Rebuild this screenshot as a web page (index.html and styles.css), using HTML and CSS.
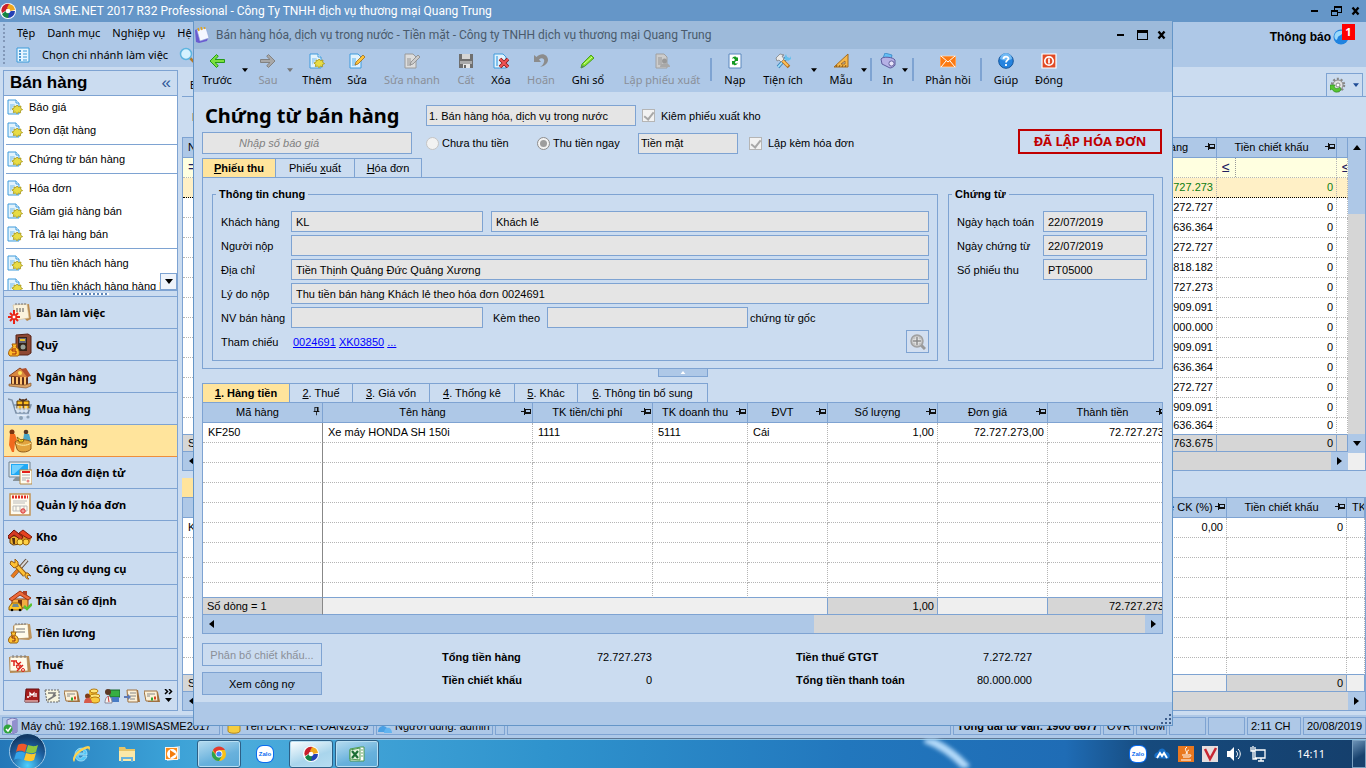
FILE: index.html
```html
<!DOCTYPE html>
<html lang="vi">
<head>
<meta charset="utf-8">
<title>MISA SME.NET 2017 R32 Professional</title>
<link rel="stylesheet" href="styles.css">
</head>
<body>
<svg class="defs" aria-hidden="true">
  <symbol id="misa" viewBox="0 0 16 16"><circle cx="8" cy="8" r="8" fill="#fff"/><path d="M3 3A7 7 0 0 1 10 1L8 6 5.500 8 2 10A7 7 0 0 1 3 3" fill="#c8202c"/><path d="M9 1a7 7 0 0 1 6 6l-5 1L7 5Z" fill="#f0a91c"/><path d="M15 8a7 7 0 0 1-7 7l0-5 3-2Z" fill="#2441b5"/><path d="M8 15a7 7 0 0 1-6-4l4-3 3 3Z" fill="#158543"/><circle cx="8" cy="8" r="2.300" fill="#fff"/></symbol>
  <symbol id="doc" viewBox="0 0 16 16"><path d="M1 1h8l3 3v11H1Z" fill="#e2f3fd" stroke="#3f9bdc"/><path d="M9 1v3h3" fill="#fff" stroke="#3f9bdc"/><path d="M3 5v7l5-7Z" fill="#a8d6f4"/><path d="m10 6 1.500 1.600 2.500-.6-.4 2.200 2 1.400-2.200 1 .2 2.200-2.200-.8-1.400 1.800-1.400-1.800-2.300.6.500-2.100L4.900 10l2.200-.9L7 7l2 .5Z" fill="#e8dc45" stroke="#a59415" stroke-width=".8"/></symbol>
  <symbol id="list" viewBox="0 0 16 16"><path d="M2 1h12v14H2Z" fill="#e6f5ff" stroke="#3a9ad9"/><path d="M4 4h2M4 7h2M4 10h2M4 13h2" stroke="#1b7cc4" stroke-width="1.500"/><path d="M8 4h4M8 7h4M8 10h4M8 13h4" stroke="#3a9ad9"/></symbol>
  <symbol id="pin" viewBox="0 0 11 9"><path d="M0 4h3v1H0ZM3 1h1v7H3ZM4 2h6v5H4Zm1 1v2h4V3Z" fill="#111" fill-rule="evenodd"/></symbol>
  <symbol id="pinv" viewBox="0 0 9 11"><path d="M2 0h5v5h1v1H5v4H4V6H1V5h1Zm1 1v4h2V1Z" fill="#111" fill-rule="evenodd"/></symbol>
  <symbol id="left" viewBox="0 0 5 8"><path d="M5 0v8L0 4Z"/></symbol>
  <symbol id="right" viewBox="0 0 5 8"><path d="M0 0v8l5-4Z"/></symbol>
  <symbol id="up" viewBox="0 0 8 5"><path d="M0 5h8L4 0Z"/></symbol>
  <symbol id="down" viewBox="0 0 8 5"><path d="M0 0h8L4 5Z"/></symbol>
  <symbol id="min" viewBox="0 0 10 12"><path d="M1 5h7v2H1Z"/></symbol>
  <symbol id="max" viewBox="0 0 12 12"><path d="M1 1h11v10H1Zm1 3v6h9V4Z" fill-rule="evenodd"/></symbol>
  <symbol id="restore" viewBox="0 0 12 12"><path d="M4 1h8v7H8v3H1V5h3Zm1 2v2h3v2h3V3ZM2 7v3h5V7Z" fill-rule="evenodd"/></symbol>
  <symbol id="close" viewBox="0 0 10 10"><path d="m1.500 1.500 6 7m0-7-6 7" stroke="#000" stroke-width="2.300"/></symbol>
  <symbol id="book" viewBox="0 0 16 16"><path d="m1 3 3-1 3 10 7-1-1 3-8 2-3-1Z" fill="#6a5bd0"/><path d="m3 3 9-2 3 10-9 3Z" fill="#f4f7ff" stroke="#8fa3d8" stroke-width=".6"/><path d="m4 1 1 3m2-4 1 3m2-4 1 3" stroke="#e2a51b" stroke-width="1.500"/></symbol>
  <symbol id="back" viewBox="0 0 16 16"><path d="m7.500 1.500 1.800 1.800L6 6.500h9.500v3H6l3.300 3.200-1.800 1.800L1 8Z" fill="#7be03e" stroke="#249a18"/></symbol>
  <symbol id="next" viewBox="0 0 16 16"><path d="M8.500 1.500 6.700 3.300 10 6.500H.5v3H10l-3.300 3.200 1.800 1.800L15 8Z" fill="#a8a8a8" stroke="#828282"/></symbol>
  <symbol id="edit" viewBox="0 0 16 16"><path d="M1 1h8l3 3v11H1Z" fill="#e0f2fd" stroke="#3f9bdc"/><path d="M3 5h4v8H3Z" fill="#9bd1f3"/><path d="m7 9 7-7 2 2-7 7-3 1Z" fill="#ffc53c" stroke="#a06c18" stroke-width=".8"/></symbol>
  <symbol id="editgray" viewBox="0 0 16 16"><path d="M1 1h8l3 3v11H1Z" fill="#ddd" stroke="#9a9a9a"/><path d="M3 5h4v8H3Z" fill="#b9b9b9"/><path d="m7 9 7-7 2 2-7 7-3 1Z" fill="#ccc" stroke="#888" stroke-width=".8"/></symbol>
  <symbol id="save" viewBox="0 0 16 16"><path d="M1 1h14v14H1Z" fill="#6f6f6f"/><path d="M4 1h8v5H4Z" fill="#d5d5d5"/><path d="M2 8h12v3H2Z" fill="#aaa"/><path d="M5 11h7v4H5Z" fill="#e6e6e6"/><path d="M6 12h2v3H6Z" fill="#666"/></symbol>
  <symbol id="del" viewBox="0 0 16 16"><path d="M1 1h9l3 3v11H1Z" fill="#e0f2fd" stroke="#3f9bdc"/><path d="M3 3h2v10H3Z" fill="#7fc1ee"/><path d="m7 6 8 8m0-8-8 8" stroke="#7d1414" stroke-width="3.600"/><path d="m7 6 8 8m0-8-8 8" stroke="#f05353" stroke-width="2.200"/></symbol>
  <symbol id="undo" viewBox="0 0 16 16"><path d="M1 2v7h7L6 6.500C9 4 12 6 11 9c-.5 2-2 4-4 5 5-1 8-4 8-7C15 1 8-1 3.500 4Z" fill="#8c8c8c"/></symbol>
  <symbol id="pencil" viewBox="0 0 16 16"><path d="m2 11 9-9 3 3-9 8-4 2Z" fill="#85e32c" stroke="#4a9f20"/><path d="m4 11 8-7" stroke="#d4ff9c"/><path d="m1 15 2-3 1 2Z" fill="#577"/></symbol>
  <symbol id="docgray" viewBox="0 0 16 16"><path d="M2 1h8l3 3v11H2Z" fill="#ccc" stroke="#a0a0a0"/><path d="M4 4h4v8H4Z" fill="#b0b0b0"/><circle cx="10.500" cy="8" r="2.500" fill="#999"/><path d="M6 14c0-5 10-5 10 0Z" fill="#a8a8a8"/></symbol>
  <symbol id="reload" viewBox="0 0 16 16"><path d="M2 1h12v14H2Z" fill="#fff" stroke="#5b87bd"/><path d="M5 6c1-3 4-3 5-1l1-1v4H7l1-1c-1-2-2-2-3-1ZM11 9c-1 4-4 4-5 2l-1 1V8h4L8 9c0 2 2 2 3 0Z" fill="#149a21"/></symbol>
  <symbol id="tools" viewBox="0 0 16 16"><path d="m3 14 9-10" stroke="#3c84bb" stroke-width="3.400"/><path d="m3 14 9-10" stroke="#9fe0fb" stroke-width="1.800"/><path d="m11 1 1 3 3 1 1-2v3l-3 2-3-2V3Z" fill="#65c0ed"/><path d="m6 6 8 8" stroke="#b06e20" stroke-width="3.600"/><path d="m7 7 6 6" stroke="#ffc058" stroke-width="2"/><path d="m1 5 4-4 4 1-2 1 2 3-3 3-2-2-2 1Z" fill="#eaeaea" stroke="#777" stroke-width=".7"/></symbol>
  <symbol id="ruler" viewBox="0 0 16 16"><path d="M15 1v13H1Zm-3 7-4 3h4Z" fill="#f6b84b" stroke="#a46b1f" fill-rule="evenodd"/><path d="m3 14 1-2m2 2 1-2m2 2 1-2m2 2 1-2" stroke="#704306" stroke-width=".8"/></symbol>
  <symbol id="print" viewBox="0 0 16 16"><path d="m3 5 2-5 7 2-1 5Z" fill="#65bff5" stroke="#2e7fc0" stroke-width=".7"/><path d="M1 6c2-3 12-2 14 1v5c-1 2-4 3-5 3L2 11Z" fill="#b6b1e5" stroke="#5f5c9e"/><circle cx="11.500" cy="10.500" r="2.600" fill="#e7e4fa" stroke="#65639f"/></symbol>
  <symbol id="mail" viewBox="0 0 16 16"><path d="M0 3h16v11H0Z" fill="#fc7a13" stroke="#ffdfc0" stroke-width=".7"/><path d="m1 3 7 6 7-6M1 14l5-6m9 6-5-6" fill="none" stroke="#fff"/></symbol>
  <symbol id="help" viewBox="0 0 16 16"><circle cx="8" cy="8" r="7.300" fill="#2583df" stroke="#14559a"/><path d="M2 6a6 6 0 0 1 12 0c-4 2-8 2-12 0" fill="#70b9f5"/><path d="M5.500 6c0-3 5-3 5-.4C10.500 7 8 7.500 8 9.500M8 11v2" fill="none" stroke="#fff" stroke-width="1.800"/></symbol>
  <symbol id="power" viewBox="0 0 16 16"><path d="M1 1h14v14H1Z" fill="#e14a25" stroke="#fff" stroke-width="1.200"/><circle cx="8" cy="8" r="4.200" fill="none" stroke="#fff" stroke-width="1.700"/><path d="M8 5.500v5" stroke="#fff" stroke-width="1.700"/></symbol>
  <symbol id="gear" viewBox="0 0 16 16"><circle cx="8" cy="8" r="6" fill="none" stroke="#888" stroke-width="2.500" stroke-dasharray="2 1.770"/><circle cx="8" cy="8" r="5" fill="#e2e2e2" stroke="#8a8a8a"/><circle cx="8" cy="8" r="2" fill="#fff" stroke="#888"/><path d="M0 8h5L4 10c2 2 4 2 6 0l1 3c-3 3-7 3-9-1L0 13Z" fill="#57c531" stroke="#278819" stroke-width=".6"/></symbol>
  <symbol id="globe" viewBox="0 0 16 16"><circle cx="8" cy="8" r="7.500" fill="#1f83e0"/><path d="M2 5c2-4 8-4 10-2-3 1-3 3-6 4-2 1-1 4-3 4-2-2-2-4-1-6" fill="#9ad9fb"/></symbol>
  <symbol id="search" viewBox="0 0 16 16"><path d="m10 10 5 5" stroke="#b27a2c" stroke-width="2.500"/><circle cx="7" cy="7" r="5.500" fill="#d4f2ff" stroke="#5eb4df" stroke-width="1.500"/></symbol>
  <symbol id="zoomadd" viewBox="0 0 16 16"><path d="m10 10 5 5" stroke="#999" stroke-width="3"/><circle cx="7" cy="7" r="6" fill="#c4c4c4" stroke="#a0a0a0" stroke-width="1.500"/><path d="M7 3v8M3 7h8" stroke="#f0f0f0" stroke-width="3"/><path d="M7 3v8M3 7h8" stroke="#888" stroke-width="1.500"/></symbol>

  <symbol id="n-desk" viewBox="0 0 24 24"><path d="m5 5 16-2 2 15-4 2Z" fill="#b98a50"/><path d="M5 4 19 3l2 14-13 2Z" fill="#fbf3dd" stroke="#d5bb8b" stroke-width=".6"/><path d="M8 4V2m3 2V2m3 2V2m3 2V2" stroke="#777"/><path d="M8 8h9M8 10h9" stroke="#555" stroke-dasharray="2 1"/><path d="M6 9v14M0 16h12M2 12l8 8m0-8-8 8" stroke="#e92316" stroke-width="2"/><circle cx="6" cy="16" r="2" fill="#fff" stroke="#e92316"/></symbol>
  <symbol id="n-fund" viewBox="0 0 24 24"><path d="m8 2 12-1 3 2v17l-3 2H8Z" fill="#8e4833" stroke="#572216"/><path d="M10 4h9v14h-9Z" fill="#352418"/><path d="M11 5h7v5h-7Z" fill="#667"/><path d="M12 7h5" stroke="#e9c32a" stroke-width="2"/><circle cx="15" cy="14" r="2.500" fill="#99a29a"/><path d="m4 11 5 0-1 3c4 2 4 8 2 9H2c-3-2-1-7 3-9Z" fill="#ffba28" stroke="#a15b09"/><path d="M8 16H4v2h4v3H4" fill="none" stroke="#9b2609"/></symbol>
  <symbol id="n-bank" viewBox="0 0 24 24"><path d="M3 11h17v9H3Z" fill="#5c2e1c"/><path d="M1 11 12 3l9 7-2 3Z" fill="#d9873f" stroke="#87401d"/><path d="m13 4 5-1 5 8-4 1Z" fill="#b24f2c"/><path d="M5 12v7m4-7v7m4-7v8m4-8v8" stroke="#ffc572" stroke-width="2"/><path d="m1 19 16 1 6-2v3l-5 2-17-2Z" fill="#dca465" stroke="#7a4924" stroke-width=".6"/><circle cx="12" cy="8" r="2" fill="#ffe65c"/></symbol>
  <symbol id="n-buy" viewBox="0 0 24 24"><path d="m0 2 4 1 4 13h13M6 8h17l-3 8" fill="none" stroke="#7d91a8" stroke-width="1.500"/><path d="M9 4h12v8H9Z" fill="#ffbf1d" stroke="#593907"/><path d="M15 2v10M9 8h12M11 2l4 2 4-2" stroke="#573319" stroke-width="1.500" fill="none"/><path d="M7 12h15M10 9v7m4-7v7m4-7v7M9 18l11 1" stroke="#e8f0f8"/><circle cx="13" cy="21" r="2" fill="#8ca2b7"/><circle cx="20" cy="20" r="1.600" fill="#8ca2b7"/></symbol>
  <symbol id="n-sell" viewBox="0 0 24 24"><circle cx="4" cy="3" r="2.500" fill="#7a3511"/><path d="m2 5 5 0 2 6-2 3-1 9H4L1 16Z" fill="#f26a1e"/><circle cx="18" cy="3" r="2.300" fill="#573825"/><path d="m16 5 5 0 2 7h-8Z" fill="#4aa7c9"/><path d="M7 13c3-3 13-3 16 0v7c-3 4-13 4-14 0Z" fill="#e2a33d" stroke="#925a17"/><path d="M8 14c4 3 11 3 15 0" stroke="#fff0a6" fill="none"/><path d="m9 8 4 3 3-1-1 3-4 0Z" fill="#ffdb22" stroke="#684506" stroke-width=".7"/></symbol>
  <symbol id="n-einv" viewBox="0 0 24 24"><path d="M1 1h21v15H1Z" fill="#e1e8ec" stroke="#738390"/><path d="M3 3h17v11H3Z" fill="#20a9f5"/><path d="m4 4 12 0-10 9H4Z" fill="#72d1ff"/><path d="M8 16h4v4H5v-1Z" fill="#879299"/><path d="M12 9h12v14H12Z" fill="#fffef1" stroke="#b58b46"/><path d="M14 11h8" stroke="#e52119" stroke-width="2"/><path d="M14 14h8m-8 3h8m-8 2h4" stroke="#aaa"/><circle cx="20" cy="20" r="1.500" fill="#e58582"/></symbol>
  <symbol id="n-inv" viewBox="0 0 24 24"><path d="M2 1h20v21H2Z" fill="#fffbef" stroke="#c39455" stroke-width="1.500"/><path d="M4 4h16" stroke="#e12b21" stroke-width="3" stroke-dasharray="2 1"/><path d="M5 8h14M5 10h12M5 13h14v5H5Zm3 0v5m4-5v5m4-5v5" fill="none" stroke="#bbb"/><circle cx="15" cy="18" r="2.200" fill="#ef9a94" stroke="#d33"/></symbol>
  <symbol id="n-store" viewBox="0 0 24 24"><path d="m10 10 6-4 8 6-3 7H10Z" fill="#d98924"/><path d="m11 8 4-3 9 7-3 2-7-4Z" fill="#e64220" stroke="#7e1b0e"/><path d="M2 11h11v8l-8 1-3-2Z" fill="#efb32d" stroke="#6c410d"/><path d="m0 11 6-6 9 7-2 3-7-5-5 4Z" fill="#d53a22" stroke="#6f1308"/><path d="M4 13h3v6H5Z" fill="#563010"/><circle cx="12" cy="17" r="3" fill="#ffe25c" stroke="#9e6a0c"/><circle cx="18" cy="17" r="3" fill="#ffcf42" stroke="#9e6a0c"/></symbol>
  <symbol id="n-tools" viewBox="0 0 24 24"><path d="m4 20 15-17" stroke="#5e4632" stroke-width="4"/><path d="m4 20 15-17" stroke="#d9d9d9" stroke-width="2"/><path d="m4 20 6-7" stroke="#e7791d" stroke-width="3"/><path d="m7 7 10 11" stroke="#985d14" stroke-width="5"/><path d="m7 7 10 11" stroke="#ffc132" stroke-width="3"/><path d="m3 4 4 2 0-4 3 3 0 4-4 2-4-4Zm17 12 3 3-3-1-1 2 2 2c-4 0-5-4-3-6Z" fill="#ffc132" stroke="#985d14"/></symbol>
  <symbol id="n-asset" viewBox="0 0 24 24"><path d="M4 10h16v9H4Z" fill="#f3ad42" stroke="#8f3b13"/><path d="m1 10 11-8 11 7-3 2-8-5-8 6Z" fill="#ee6a3b" stroke="#9f3512"/><path d="M15 2h4v5l-4-2Z" fill="#ad3f28"/><path d="M10 11h4v8h-4Z" fill="#713312"/><path d="m1 18 3-4h7l3 4v3H1Z" fill="#ffc625" stroke="#97630a"/><path d="m5 15 5 0 1 3H4Z" fill="#6f8b92"/><circle cx="4" cy="21" r="1.300"/><circle cx="12" cy="21" r="1.300"/><path d="m16 17 3 3 5-5" fill="none" stroke="#59c230" stroke-width="2.500"/></symbol>
  <symbol id="n-pay" viewBox="0 0 24 24"><path d="m5 5 17-2 2 14-3 2-16-1Z" fill="#be945b"/><path d="m6 4 14-1 1 14-15 1Z" fill="#fffbea" stroke="#ad8753" stroke-width=".7"/><path d="M8 4V2m3 2V2m3 2V2m3 2V2M8 8h9m-9 3h9" stroke="#777"/><path d="m3 11 5 0-1 3c4 2 4 7 2 8H2c-3-2-1-6 2-8Z" fill="#ffc230" stroke="#98600d"/><path d="M7 15H4v2h3v3H4" fill="none" stroke="#872b0e"/></symbol>
  <symbol id="n-tax" viewBox="0 0 24 24"><path d="m1 4 20-1 2 16-21 1Z" fill="#b98d55"/><path d="M2 4h17l1 14H2Z" fill="#fffbea" stroke="#ad8753" stroke-width=".7"/><path d="M5 5V2m4 3V2m4 3V2m4 3V2" stroke="#777"/><path d="M3 8h6M6 8v5M8 13l5-4M8 9l5 4M9 18l6-6" stroke="#dd241b" stroke-width="1.500"/><circle cx="10" cy="14" r="1.500" fill="none" stroke="#dd241b"/><circle cx="15" cy="17" r="1.500" fill="none" stroke="#dd241b"/></symbol>
  <symbol id="t-book" viewBox="0 0 16 16"><path d="M2 1h13v13H1Z" fill="#a71d1d" stroke="#641010"/><path d="M1 13h13" stroke="#fff"/><path d="M3 9h2m1 0V5l2 2 2-2v4m2-4v4" stroke="#fff" stroke-width="1.300" fill="none"/></symbol>
  <symbol id="t-check" viewBox="0 0 16 16"><path d="M1 2h14v12H3Z" fill="#f7f5df" stroke="#666" stroke-dasharray="2 1"/><path d="m4 5 7 0-2 3m-5 4 8-5" stroke="#777" fill="none" stroke-width="1.500"/></symbol>
  <symbol id="t-cal" viewBox="0 0 16 16"><path d="M1 4h13l2 10H4Z" fill="#a06f3b"/><path d="M0 3h13l1 10H2Z" fill="#fbf0d8" stroke="#9e7342"/><path d="M3 6h8M3 8h3" stroke="#888"/><path d="M7 11h2" stroke="#3a3" stroke-width="3"/><path d="M10 10h2" stroke="#d42" stroke-width="3"/></symbol>
  <symbol id="t-con" viewBox="0 0 16 16"><path d="M3 2h11l2 12H5Z" fill="#a06f3b"/><path d="M3 2h10l1 12H4Z" fill="#fbf0d8" stroke="#9e7342"/><path d="M6 5h6M6 8h6M6 11h5" stroke="#888"/><path d="M0 8h4V6l3 3-3 3v-2H0Z" fill="#5d79b5"/></symbol>
  <symbol id="t-coins" viewBox="0 0 16 16"><path d="M5 2h8v13H5Z" fill="#f4bd29"/><ellipse cx="10" cy="3" rx="4" ry="2" fill="#ffe678" stroke="#b67b10"/><ellipse cx="11" cy="8" rx="5" ry="2" fill="#ffe678" stroke="#b67b10"/><ellipse cx="11" cy="12" rx="5" ry="3" fill="#f8cb3e" stroke="#b67b10"/><circle cx="3.500" cy="8" r="2.500" fill="#7e3d18"/><path d="M0 15c0-7 8-7 8 0Z" fill="#d65a4a"/></symbol>
  <symbol id="t-person" viewBox="0 0 16 16"><path d="M5 2h11v7H6Z" fill="#37af42" stroke="#17652b"/><path d="M7 9h8v5H8Z" fill="#487cc5"/><circle cx="4" cy="4" r="3" fill="#5b3825"/><path d="M1 15c0-9 7-9 7 0Z" fill="#f6f3ef" stroke="#889"/><path d="m4 8 1 6" stroke="#c33"/></symbol>
</svg>

<div class="desktop">
<div class="app">
  <header class="apptitle"><svg class="i16"><use href="#misa"/></svg><h1>MISA SME.NET 2017 R32 Professional - Công Ty TNHH dịch vụ thương mại Quang Trung</h1>
    <div class="winbtns"><button aria-label="Thu nhỏ"><svg class="i12"><use href="#min"/></svg></button><button aria-label="Khôi phục"><svg class="i12"><use href="#restore"/></svg></button><button aria-label="Đóng"><svg class="i10"><use href="#close"/></svg></button></div>
  </header>
  <div class="menus">
    <div>
      <nav class="menu"><i class="grip"></i><button>Tệp</button><button>Danh mục</button><button>Nghiệp vụ</button><button>Hệ thống</button></nav>
      <div class="menu second"><i class="grip"></i><button><svg class="i16"><use href="#list"/></svg>Chọn chi nhánh làm việc</button><button aria-label="Tìm"><svg class="i16"><use href="#search"/></svg></button></div>
    </div>
    <button class="notice">Thông báo<svg class="i16"><use href="#globe"/></svg><span class="badge">1</span></button>
  </div>
  <div class="work">
    <aside class="side">
      <div class="sidehead"><h2>Bán hàng</h2><button aria-label="Thu gọn">«</button></div>
      <div class="tasks">
        <a href="#a"><svg class="i16"><use href="#doc"/></svg>Báo giá</a>
        <a href="#a"><svg class="i16"><use href="#doc"/></svg>Đơn đặt hàng</a><hr>
        <a href="#a"><svg class="i16"><use href="#doc"/></svg>Chứng từ bán hàng</a><hr>
        <a href="#a"><svg class="i16"><use href="#doc"/></svg>Hóa đơn</a>
        <a href="#a"><svg class="i16"><use href="#doc"/></svg>Giảm giá hàng bán</a>
        <a href="#a"><svg class="i16"><use href="#doc"/></svg>Trả lại hàng bán</a><hr>
        <a href="#a"><svg class="i16"><use href="#doc"/></svg>Thu tiền khách hàng</a>
        <a href="#a"><svg class="i16"><use href="#doc"/></svg>Thu tiền khách hàng hàng loạt</a>
        <button class="more" aria-label="Cuộn xuống"><svg class="arr"><use href="#down"/></svg></button>
      </div>
      <div class="handle"><i></i></div>
      <nav class="mods">
        <button><svg><use href="#n-desk"/></svg>Bàn làm việc</button>
        <button><svg><use href="#n-fund"/></svg>Quỹ</button>
        <button><svg><use href="#n-bank"/></svg>Ngân hàng</button>
        <button><svg><use href="#n-buy"/></svg>Mua hàng</button>
        <button class="on"><svg><use href="#n-sell"/></svg>Bán hàng</button>
        <button><svg><use href="#n-einv"/></svg>Hóa đơn điện tử</button>
        <button><svg><use href="#n-inv"/></svg>Quản lý hóa đơn</button>
        <button><svg><use href="#n-store"/></svg>Kho</button>
        <button><svg><use href="#n-tools"/></svg>Công cụ dụng cụ</button>
        <button><svg><use href="#n-asset"/></svg>Tài sản cố định</button>
        <button><svg><use href="#n-pay"/></svg>Tiền lương</button>
        <button><svg><use href="#n-tax"/></svg>Thuế</button>
      </nav>
      <div class="quick">
        <button aria-label="Sổ"><svg class="i16"><use href="#t-book"/></svg></button>
        <button aria-label="Kiểm tra"><svg class="i16"><use href="#t-check"/></svg></button>
        <button aria-label="Lịch"><svg class="i16"><use href="#t-cal"/></svg></button>
        <button aria-label="Giá thành"><svg class="i16"><use href="#t-coins"/></svg></button>
        <button aria-label="Đối tượng"><svg class="i16"><use href="#t-person"/></svg></button>
        <button aria-label="Hợp đồng"><svg class="i16"><use href="#t-con"/></svg></button>
        <button aria-label="Báo cáo"><svg class="i16"><use href="#t-cal"/></svg></button>
        <button aria-label="Thêm"><svg class="chev" viewBox="0 0 9 14"><path d="m1 0 2.500 2.500L1 5m4-5 2.500 2.500L5 5" fill="none" stroke="#000" stroke-width="1.500"/><path d="M1 9h7l-3.500 4Z"/></svg></button>
      </div>
    </aside>
    <main class="content">
      <div class="contentbar"><span>Bán hàng</span><button class="gearbtn" aria-label="Tùy chọn"><svg class="i16"><use href="#gear"/></svg><svg class="arr s"><use href="#down"/></svg></button></div>
      <div class="period">Kỳ</div>
      <div class="back b1">
        <div class="backcol">
          <table class="grid">
            <colgroup><col class="w120"><col><col class="w120"><col class="w120"><col class="w11"></colgroup>
            <thead><tr><th class="l">Ngày</th><th></th><th><div>Tổng tiền hàng<svg><use href="#pin"/></svg></div></th><th><div>Tiền chiết khấu<svg><use href="#pin"/></svg></div></th><th></th></tr></thead>
            <tbody>
            <tr class="filter"><td><b>=</b></td><td></td><td></td><td><b class="op">≤</b></td><td><b>≤</b></td></tr>
            <tr class="sel"><td></td><td></td><td>72.727.273</td><td>0</td><td></td></tr>
            <tr><td><td><td>37.272.727<td>0<td></tr>
            <tr><td><td><td>38.636.364<td>0<td></tr>
            <tr><td><td><td>37.272.727<td>0<td></tr>
            <tr><td><td><td>31.818.182<td>0<td></tr>
            <tr><td><td><td>72.727.273<td>0<td></tr>
            <tr><td><td><td>40.909.091<td>0<td></tr>
            <tr><td><td><td>40.000.000<td>0<td></tr>
            <tr><td><td><td>40.909.091<td>0<td></tr>
            <tr><td><td><td>38.636.364<td>0<td></tr>
            <tr><td><td><td>37.272.727<td>0<td></tr>
            <tr><td><td><td>40.909.091<td>0<td></tr>
            <tr class="tight"><td><td><td>38.636.364<td>0<td></tr>
            </tbody>
            <tfoot><tr><td class="l">Số dòng</td><td></td><td>9.763.675</td><td>0</td><td></td></tr></tfoot>
          </table>
          <div class="hs"><button aria-label="Trái"><svg class="arh"><use href="#left"/></svg></button><i class="thumb"></i><i class="rest"></i><button aria-label="Phải"><svg class="arh"><use href="#right"/></svg></button></div>
        </div>
        <div class="vs"><button aria-label="Lên"><svg class="arr"><use href="#up"/></svg></button><i class="vthumb"></i><i class="rest"></i><button aria-label="Xuống"><svg class="arr"><use href="#down"/></svg></button><i class="corner"></i></div>
      </div>
      <div class="backtab"><button>● Hàng tiền</button></div>
      <div class="back b2">
        <div class="backcol">
          <table class="grid">
            <colgroup><col class="w120"><col><col class="w80"><col class="w120"><col class="w18"></colgroup>
            <thead><tr><th></th><th></th><th><div>Tỷ lệ CK (%)<svg><use href="#pin"/></svg></div></th><th><div>Tiền chiết khấu<svg><use href="#pin"/></svg></div></th><th class="l">TK</th></tr></thead>
            <tbody>
            <tr><td class="l">KF250</td><td></td><td>0,00</td><td>0</td><td></td></tr>
            <tr><td><td><td><td><td></tr><tr><td><td><td><td><td></tr><tr><td><td><td><td><td></tr><tr><td><td><td><td><td></tr><tr><td><td><td><td><td></tr><tr><td><td><td><td><td></tr>
            <tr class="tight"><td><td><td><td><td></tr>
            </tbody>
            <tfoot><tr><td class="l">Số dòng</td><td></td><td class="lt"></td><td>0</td><td class="lt"></td></tr></tfoot>
          </table>
          <div class="hs"><button aria-label="Trái"><svg class="arh"><use href="#left"/></svg></button><i class="thumb"></i><i class="rest"></i><button aria-label="Phải"><svg class="arh"><use href="#right"/></svg></button></div>
        </div>
      </div>
    </main>
  </div>
  <footer class="status">
    <span class="s1"><svg class="i16" viewBox="0 0 16 16"><path d="m4 2 5-2 5 1v13l-5 2-5-3Z" fill="#d4d2f1" stroke="#7676b3"/><path d="m9 3 5-2v13l-5 2Z" fill="#9290ce"/><circle cx="5" cy="11" r="4.500" fill="#2fa53b"/><path d="m3 11 2 2 3-4" fill="none" stroke="#fff" stroke-width="1.500"/></svg>Máy chủ: 192.168.1.19\MISASME2017</span>
    <span class="s2"><svg class="i16" viewBox="0 0 16 16"><path d="M2 4v9c0 3 12 3 12 0V4Z" fill="#f5cd3f" stroke="#b18620"/><ellipse cx="8" cy="4" rx="6" ry="2.500" fill="#fff09a" stroke="#b18620"/></svg>Tên DLKT: KETOAN2019</span>
    <span class="s3"><svg class="i16" viewBox="0 0 16 16"><circle cx="6" cy="5" r="3" fill="#7cc4f4"/><path d="M1 14c0-8 10-8 10 0Z" fill="#4aa0e4"/><circle cx="11" cy="6" r="3" fill="#a6dafa"/><path d="M7 15c0-7 8-7 8 0Z" fill="#62b4f0"/></svg>Người dùng: admin</span>
    <span class="s4"></span><span class="grow"></span><b class="s5">Tổng đài tư vấn: 1900 8677</b><span class="s6">OVR</span><span class="s6">NUM</span><span class="s7"></span><span class="s7"></span><span class="s8">2:11 CH</span><span class="s9">20/08/2019</span>
  </footer>

  <section class="dialog" role="dialog" aria-label="Chứng từ bán hàng">
    <header class="dtitle"><svg class="i16"><use href="#book"/></svg><span>Bán hàng hóa, dịch vụ trong nước - Tiền mặt - Công ty TNHH dịch vụ thương mại Quang Trung</span>
      <div class="winbtns"><button aria-label="Thu nhỏ"><svg class="i12"><use href="#min"/></svg></button><button aria-label="Phóng to"><svg class="i12"><use href="#max"/></svg></button><button aria-label="Đóng cửa sổ"><svg class="i10"><use href="#close"/></svg></button></div>
    </header>
    <div class="tools">
      <button><svg class="i16"><use href="#back"/></svg>Trước</button><svg class="dd"><use href="#down"/></svg>
      <button disabled><svg class="i16"><use href="#next"/></svg>Sau</button><svg class="dd off"><use href="#down"/></svg>
      <button><svg class="i16"><use href="#doc"/></svg>Thêm</button>
      <button><svg class="i16"><use href="#edit"/></svg>Sửa</button>
      <button disabled><svg class="i16"><use href="#editgray"/></svg>Sửa nhanh</button>
      <button disabled><svg class="i16"><use href="#save"/></svg>Cất</button>
      <button><svg class="i16"><use href="#del"/></svg>Xóa</button>
      <button disabled><svg class="i16"><use href="#undo"/></svg>Hoãn</button>
      <button><svg class="i16"><use href="#pencil"/></svg>Ghi sổ</button>
      <button disabled><svg class="i16"><use href="#docgray"/></svg>Lập phiếu xuất</button>
      <i></i>
      <button><svg class="i16"><use href="#reload"/></svg>Nạp</button>
      <button><svg class="i16"><use href="#tools"/></svg>Tiện ích</button><svg class="dd"><use href="#down"/></svg>
      <button><svg class="i16"><use href="#ruler"/></svg>Mẫu</button><svg class="dd"><use href="#down"/></svg>
      <i></i>
      <button><svg class="i16"><use href="#print"/></svg>In</button><svg class="dd"><use href="#down"/></svg>
      <i></i>
      <button><svg class="i16"><use href="#mail"/></svg>Phản hồi</button>
      <i></i>
      <button><svg class="i16"><use href="#help"/></svg>Giúp</button>
      <button><svg class="i16"><use href="#power"/></svg>Đóng</button>
    </div>
    <div class="dbody">
      <div class="top">
        <div class="topgrid">
          <h2>Chứng từ bán hàng</h2>
          <select class="fld" aria-label="Loại chứng từ"><option>1. Bán hàng hóa, dịch vụ trong nước</option></select>
          <label class="ck"><input type="checkbox" checked disabled>Kiêm phiếu xuất kho</label>
          <input class="fld quote" type="text" placeholder="Nhập số báo giá" aria-label="Số báo giá">
          <div class="radios"><label class="ck"><input type="radio" name="pay" disabled>Chưa thu tiền</label><label class="ck"><input type="radio" name="pay" checked disabled>Thu tiền ngay</label></div>
          <div class="payrow"><select class="fld cash" aria-label="Hình thức"><option>Tiền mặt</option></select><label class="ck"><input type="checkbox" checked disabled>Lập kèm hóa đơn</label></div>
        </div>
        <strong class="stamp">ĐÃ LẬP HÓA ĐƠN</strong>
      </div>
      <div class="tabs t1"><button class="on"><u>P</u>hiếu thu</button><button>Phiếu <u>x</u>uất</button><button><u>H</u>óa đơn</button></div>
      <div class="panel">
        <fieldset class="general"><legend>Thông tin chung</legend>
          <div class="row"><label for="kh">Khách hàng</label><input class="fld w192" id="kh" value="KL" readonly><input class="fld" aria-label="Tên khách hàng" value="Khách lẻ" readonly></div>
          <div class="row"><label for="nn">Người nộp</label><input class="fld" id="nn" readonly></div>
          <div class="row"><label for="dc">Địa chỉ</label><input class="fld" id="dc" value="Tiền Thịnh Quảng Đức Quảng Xương" readonly></div>
          <div class="row"><label for="ld">Lý do nộp</label><input class="fld" id="ld" value="Thu tiền bán hàng Khách lẻ theo hóa đơn 0024691" readonly></div>
          <div class="row"><label for="nv">NV bán hàng</label><input class="fld w192" id="nv" readonly><label class="att" for="kt">Kèm theo</label><input class="fld w201" id="kt" readonly><span class="unit">chứng từ gốc</span></div>
          <div class="row"><label>Tham chiếu</label><span class="refs"><a href="#r1">0024691</a> <a href="#r2">XK03850</a> <a href="#r3">...</a></span><button class="find" aria-label="Tìm chứng từ"><svg class="i16"><use href="#zoomadd"/></svg></button></div>
        </fieldset>
        <fieldset class="voucher"><legend>Chứng từ</legend>
          <div class="row"><label for="d1">Ngày hạch toán</label><input class="fld" id="d1" value="22/07/2019" readonly></div>
          <div class="row"><label for="d2">Ngày chứng từ</label><input class="fld" id="d2" value="22/07/2019" readonly></div>
          <div class="row"><label for="d3">Số phiếu thu</label><input class="fld" id="d3" value="PT05000" readonly></div>
        </fieldset>
      </div>
      <button class="split" aria-label="Thu gọn"><svg class="arr"><use href="#up"/></svg></button>
      <div class="tabs t2"><button class="on"><u>1</u>. Hàng tiền</button><button><u>2</u>. Thuế</button><button><u>3</u>. Giá vốn</button><button><u>4</u>. Thống kê</button><button><u>5</u>. Khác</button><button><u>6</u>. Thông tin bổ sung</button></div>
      <div class="gridbox">
        <table class="grid items">
          <colgroup><col class="w120"><col><col class="w120"><col class="w95"><col class="w80"><col class="w110"><col class="w110"><col class="w120"></colgroup>
          <thead><tr><th><div>Mã hàng<svg><use href="#pinv"/></svg></div></th><th><div>Tên hàng<svg><use href="#pin"/></svg></div></th><th><div>TK tiền/chi phí<svg><use href="#pin"/></svg></div></th><th><div>TK doanh thu<svg><use href="#pin"/></svg></div></th><th><div>ĐVT<svg><use href="#pin"/></svg></div></th><th><div>Số lượng<svg><use href="#pin"/></svg></div></th><th><div>Đơn giá<svg><use href="#pin"/></svg></div></th><th><div>Thành tiền<svg><use href="#pin"/></svg></div></th></tr></thead>
          <tbody>
          <tr><td>KF250<td>Xe máy HONDA SH 150i<td>1111<td>5111<td>Cái<td class="n">1,00<td class="n">72.727.273,00<td class="n">72.727.273</tr>
          <tr><td><td><td><td><td><td><td><td></tr><tr><td><td><td><td><td><td><td><td></tr><tr><td><td><td><td><td><td><td><td></tr><tr><td><td><td><td><td><td><td><td></tr><tr><td><td><td><td><td><td><td><td></tr><tr><td><td><td><td><td><td><td><td></tr><tr><td><td><td><td><td><td><td><td></tr>
          <tr class="tight"><td><td><td><td><td><td><td><td></tr>
          </tbody>
          <tfoot><tr><td>Số dòng = 1</td><td class="lt" colspan="4"></td><td class="n">1,00</td><td class="lt"></td><td class="n">72.727.273</td></tr></tfoot>
        </table>
        <div class="hs"><button aria-label="Trái"><svg class="arh"><use href="#left"/></svg></button><i class="thumb"></i><i class="rest"></i><button aria-label="Phải"><svg class="arh"><use href="#right"/></svg></button></div>
      </div>
      <div class="bottom">
        <div class="acts"><button disabled>Phân bổ chiết khấu...</button><button>Xem công nợ</button></div>
        <dl><dt>Tổng tiền hàng</dt><dd>72.727.273</dd><dt>Tiền chiết khấu</dt><dd>0</dd></dl>
        <dl class="d2"><dt>Tiền thuế GTGT</dt><dd>7.272.727</dd><dt>Tổng tiền thanh toán</dt><dd>80.000.000</dd></dl>
      </div>
    </div>
    <footer class="dfoot"><svg viewBox="0 0 10 10"><path d="M8 0h2v2H8ZM4 4h2v2H4Zm4 0h2v2H8ZM0 8h2v2H0Zm4 0h2v2H4Zm4 0h2v2H8Z" fill="#3f5f8c"/></svg></footer>
  </section>
</div>

<nav class="taskbar">
  <button class="start" aria-label="Start"><svg viewBox="0 0 24 24"><path d="M2 5c4-2 6-1 9 0l-2 7c-3-1-5-2-9 0Z" fill="#f0582a"/><path d="M12 5c4 1 6 2 10 0l-2 7c-4 2-6 1-10 0Z" fill="#8dc63f"/><path d="M0 13c4-2 6-1 9 0l-2 7c-3-1-5-2-9 0Z" fill="#35a3e8"/><path d="M10 13c4 1 6 2 10 0l-2 7c-4 2-6 1-10 0Z" fill="#ffc72e"/></svg></button>
  <button class="tb" aria-label="Internet Explorer"><svg class="i18" viewBox="0 0 18 18"><path d="M15 11c-2 8-13 6-12-2 1-8 13-8 12 1H6c0 4 4 4 5 1ZM6 8h6c0-4-6-4-6 0" fill="#55c6f5" stroke="#c9f0ff" stroke-width=".6" fill-rule="evenodd"/><path d="M2 17C-2 13 6 3 16 1c3 0 2 3 1 5 0-3-1-3-3-2C8 6 2 12 3 15Z" fill="#ffd34d"/></svg></button>
  <button class="tb" aria-label="Explorer"><svg class="i18" viewBox="0 0 18 18"><path d="M1 2h6l1 2h9v12H1Z" fill="#e8c566"/><path d="M1 6h16v10H1Z" fill="#fbe9a8"/><path d="M4 17v-4h10v4" fill="none" stroke="#68b4de" stroke-width="2"/></svg></button>
  <button class="tb" aria-label="Media Player"><svg class="i18" viewBox="0 0 18 18"><path d="m3 3 13-2v13L3 16Z" fill="#b6d9ef"/><path d="M1 2h13v13H1Z" fill="#fff3e4"/><path d="M2 3h11v11H2Z" fill="#fa8b1b"/><circle cx="8" cy="9" r="5" fill="#fff"/><path d="m6 5 6 4-6 4Z" fill="#f47c0b"/></svg></button>
  <button class="tb open" aria-label="Chrome"><svg class="i16" viewBox="0 0 16 16"><circle cx="8" cy="8" r="7" fill="#fbc116"/><path d="M2 4a7 7 0 0 1 12 0H8L5 9Z" fill="#e33b2e"/><path d="M1.500 5A7 7 0 0 0 8 15l3-5-6-1Z" fill="#2da24c"/><circle cx="8" cy="8" r="3.400" fill="#fff"/><circle cx="8" cy="8" r="2.600" fill="#4285f4"/></svg></button>
  <button class="tb"><span class="zalo">Zalo</span></button>
  <button class="tb open bright" aria-label="MISA"><svg class="i16"><use href="#misa"/></svg></button>
  <button class="tb open" aria-label="Excel"><svg class="i16" viewBox="0 0 16 16"><path d="M1 3 12 1h3v14H1Z" fill="#fff" stroke="#4d9a50"/><path d="M12 4h2m-2 3h2m-2 3h2" stroke="#68a765"/><path d="m1 4 10-2v12L1 13Z" fill="#e3f2dd" stroke="#4d9a50"/><path d="m3 5 6 7m0-7-6 7" stroke="#1c6e34" stroke-width="2.200"/></svg></button>
  <svg class="streak" viewBox="0 0 90 29"><path d="M15 0c20 7 32 18 42 29" fill="none" stroke="#b5dbfa" stroke-width="8"/></svg>
  <div class="tray">
    <span class="zalo">Zalo</span>
    <svg class="i16" viewBox="0 0 16 16"><path d="M1 12c-2-4 1-5 3-6 2-5 7-4 8 0 4 0 5 5 2 7Z" fill="#176fc8"/><path d="m3 12 3-5 2 3 2-3 3 5" fill="none" stroke="#fff" stroke-width="2"/></svg>
    <svg class="i16" viewBox="0 0 16 16"><path d="M0 0h16v16H0Z" fill="#e97820"/><path d="M9 1C5 4 10 5 8 8M11 4C8 5 10 6 9 8M4 9h7c3-1 2 2 0 2M5 11h6M3 14h10" fill="none" stroke="#fff"/></svg>
    <svg class="i16" viewBox="0 0 16 16"><path d="M0 0h16v16H0Z" fill="#e7dede"/><path d="m3 3 5 10 6-11" fill="none" stroke="#c72632" stroke-width="2.500"/></svg>
    <svg class="i16" viewBox="0 0 16 16"><path d="M1 5h3l4-4v14l-4-4H1Z" fill="#fff"/><path d="M10 5c2 2 2 4 0 6m2-8c3 3 3 7 0 10" fill="none" stroke="#fff"/></svg>
    <svg class="i16" viewBox="0 0 16 16"><path d="M5 4h10v8H5Zm3 11h6m-3-3v3M1 1v4h4V1M3 0v13h4" fill="none" stroke="#fff" stroke-width="1.300"/></svg>
  </div>
  <time>14:11</time>
  <button class="show" aria-label="Hiện màn hình"></button>
</nav>
</div>
</body>
</html>
```
FILE: styles.css
```css
* { box-sizing: border-box; }
html, body { height: 100%; margin: 0; }
body { font: 11px/14px "Liberation Sans", Arial, sans-serif; color: #000; overflow: hidden; }
button, input, select { font: inherit; color: inherit; margin: 0; padding: 0; border: 0; background: none; border-radius: 0; }
h1, h2 { margin: 0; }
a { color: inherit; }
svg { flex: none; display: block; }
.defs { position: absolute; width: 0; height: 0; }
.i10 { width: 10px; height: 10px; }
.i12 { width: 12px; height: 12px; }
.i16 { width: 16px; height: 16px; }
.i18 { width: 18px; height: 18px; }
.arr { width: 8px; height: 5px; }
.arh { width: 5px; height: 8px; }

.desktop { height: 100%; display: flex; flex-direction: column; background: #aec8e7; }
.app { flex: 1; min-height: 0; position: relative; display: flex; flex-direction: column; }

.apptitle { height: 22px; flex: none; display: flex; align-items: center; gap: 6px; background: #6596c8; color: #fff; }
.apptitle h1 { font: 12px/16px Roboto, sans-serif; }
.winbtns { margin-left: auto; display: flex; align-items: center; gap: 9px; padding-right: 5px; }

.menus { height: 45px; flex: none; display: flex; justify-content: space-between; background: #aec8e7; font: 11px/16px "Noto Sans", sans-serif; }
.menu { height: 22px; display: flex; align-items: center; gap: 12px; padding-left: 3px; }
.menu.second { gap: 11px; }
.menu.second button { display: flex; align-items: center; gap: 11px; }
.grip { width: 4px; height: 18px; margin-right: -2px; background: radial-gradient(circle at 1px 1px, #8298b8 1px, transparent 1px) 0 0 / 4px 4px; }
.menu.second .grip { margin-right: -3px; }
.notice { position: relative; height: 30px; display: flex; align-items: center; gap: 2px; padding-right: 17px; font: bold 12px/16px "Liberation Sans", sans-serif; }
.badge { position: absolute; right: 11px; top: 2px; width: 13px; background: #f00; color: #fff; font: bold 11px/16px "Noto Sans", sans-serif; text-align: center; }

.work { flex: 1; min-height: 0; display: flex; gap: 4px; background: #cbdcf0; padding: 0 0 4px 3px; }
.side { width: 175px; flex: none; margin-top: 3px; display: flex; flex-direction: column; border: 1px solid #7ea3d2; }
.sidehead { height: 25px; flex: none; display: flex; justify-content: space-between; align-items: center; padding: 0 6px; border-bottom: 1px solid #7ea3d2; }
.sidehead h2 { font-size: 17px; line-height: 20px; }
.sidehead button { color: #2f5898; font-size: 17px; line-height: 18px; }
.tasks { position: relative; height: 194px; background: #fff; overflow: hidden; }
.tasks a { height: 23px; display: flex; align-items: center; gap: 6px; padding: 0 0 2px 3px; text-decoration: none; white-space: nowrap; }
.tasks hr { margin: 2px 0 3px 2px; border: 0; border-top: 1px solid #7ea3d2; }
.more { position: absolute; right: 0; bottom: 0; width: 17px; height: 17px; display: grid; place-items: center; background: #eef3fa; border: 1px solid #7ea3d2; }
.handle { height: 7px; border: solid #7ea3d2; border-width: 1px 0; display: flex; justify-content: center; align-items: center; }
.handle i { width: 36px; height: 2px; background: repeating-linear-gradient(90deg, #5f87ba 0 2px, #fff 2px 4px); }
.mods { display: flex; flex-direction: column; font: bold 11px/16px "Noto Sans", sans-serif; }
.mods button { height: 32px; display: flex; align-items: center; gap: 4px; padding-left: 4px; border-bottom: 1px solid #7ea3d2; }
.mods button.on { background: #ffe49c; border-bottom-color: #ee8e3c; }
.mods svg { width: 24px; height: 24px; }
.quick { flex: 1; display: flex; align-items: center; justify-content: flex-end; gap: 4px; padding-right: 4px; }
.chev { width: 9px; height: 14px; }

.content { flex: 1; min-width: 0; display: flex; flex-direction: column; }
.contentbar { height: 30px; flex: none; display: flex; justify-content: space-between; align-items: center; padding: 6px 3px 0 8px; border-bottom: 1px solid #7ea3d2; }
.gearbtn { width: 37px; height: 24px; display: flex; align-items: center; justify-content: space-around; border: 1px solid #7ea3d2; fill: #1f4c96; }
.arr.s { width: 6px; height: 4px; }
.period { height: 40px; flex: none; padding: 13px 10px; }
.back { display: flex; border: 1px solid #7ea3d2; background: #fff; }
.backcol { flex: 1; min-width: 0; display: flex; flex-direction: column; }
.backtab { padding-top: 7px; height: 26px; }
.backtab button { height: 19px; width: 80px; background: #ffe49c; color: #e07b1b; font-size: 10px; }

.grid { border-collapse: separate; border-spacing: 0; table-layout: fixed; width: 100%; }
.grid th, .grid td { height: 20px; padding: 0 3px 2px 5px; border-right: 1px dotted #b5b5b5; border-bottom: 1px dotted #b5b5b5; text-align: right; white-space: nowrap; overflow: hidden; line-height: 14px; }
.grid th { background: #aec8e7; font-weight: normal; border-right: 1px solid #7ea3d2; border-bottom: 1px solid #7ea3d2; padding: 0 0 2px; text-align: center; }
.grid th div { display: flex; align-items: center; padding-left: 1px; }
.grid th div svg { width: 11px; height: 9px; margin-left: auto; }
.grid th div::before { content: ""; margin-right: auto; }
.grid .l { text-align: left; padding-left: 5px; }
.grid .tight td { height: 17px; border-bottom-color: #7ea3d2; border-bottom-style: solid; }
.grid tfoot td { height: 17px; padding-bottom: 0; background: #d6d6d6; border-right: 1px solid #7ea3d2; border-bottom: 1px solid #7ea3d2; }
.grid tfoot td.lt { background: #efefef; }
.filter td { background: #ffffe0; color: #202060; }
.grid .filter td { text-align: left; padding-bottom: 0; }
.filter b { font-weight: normal; font-size: 14px; line-height: 14px; }
.filter .op { display: block; width: 14px; height: 19px; border-right: 1px dotted #999; line-height: 19px; }
.grid .sel td { background: #fff0c6; color: #0c7c10; border-bottom: 1px dotted #000; }
.w11 { width: 11px; } .w18 { width: 18px; } .w80 { width: 80px; } .w95 { width: 95px; } .w110 { width: 110px; } .w120 { width: 120px; }

.hs { height: 18px; display: flex; background: #aec8e7; }
.hs button { width: 17px; display: grid; place-items: center; }
.hs .thumb { flex: 596; }
.hs .rest { flex: 332; background: #d6d6d6; }
.vs { width: 17px; display: flex; flex-direction: column; background: #aec8e7; }
.vs button { height: 19px; display: grid; place-items: center; }
.vs .vthumb { height: 57px; }
.vs .rest { flex: 1; background: #d6d6d6; }
.vs .corner { height: 17px; background: #efefef; }

.status { height: 24px; flex: none; display: flex; align-items: stretch; gap: 2px; padding: 2px 0 3px 2px; background: #aec8e7; border-bottom: 1px solid #5e7794; white-space: nowrap; }
.status > * { display: flex; align-items: center; gap: 2px; padding: 0 3px; border: 1px solid #7ea3d2; overflow: hidden; }
.status .s1 { width: 218px; padding-left: 0; } .status .s2 { width: 152px; } .status .s3 { width: 117px; padding-left: 0; } .status .s4 { width: 10px; }
.status .grow { flex: 1; }
.status .s5 { width: 148px; } .status .s6 { width: 31px; } .status .s7 { width: 37px; } .status .s8 { width: 54px; } .status .s9 { width: 63px; }

.dialog { position: absolute; left: 193px; right: 193px; top: 20px; bottom: 13px; display: flex; flex-direction: column; border: 1px solid #6596c8; background: #cbdcf0; }
.dtitle { height: 28px; flex: none; display: flex; align-items: center; gap: 6px; background: #9dbada; color: #4a5a6c; font: 12px/16px Roboto, sans-serif; }
.tools { height: 43px; flex: none; display: grid; background: #aec8e7; font: 11px/14px "Noto Sans", sans-serif;
  grid-template-columns: 46px 10px 36px 8px 46px 34px 76px 32px 38px 42px 52px 96px 2px 46px 50px 12px 42px 4px 9px 26px 8px 7px 64px 2px 48px 38px; }
.tools button { display: flex; flex-direction: column; align-items: center; gap: 4px; padding-top: 4px; white-space: nowrap; min-width: 0; }
.tools button:disabled { color: #8a8f98; }
.dd { width: 6px; height: 4px; margin-top: 19px; overflow: visible; justify-self: center; }
.dd.off { fill: #777; }
.tools > i { width: 2px; height: 23px; margin-top: 9px; justify-self: center; background: #7ea3d2; }

.dbody { flex: 1; min-height: 0; display: flex; flex-direction: column; padding: 13px 9px 8px 8px; }
.top { display: flex; justify-content: space-between; align-items: flex-end; }
.topgrid { display: grid; grid-template-columns: 224px 210px auto; row-gap: 6px; align-items: center; }
.topgrid h2 { font: bold 20px/20px "Noto Sans", sans-serif; padding-left: 3px; white-space: nowrap; }
.fld { appearance: none; height: 21px; flex: 1; min-width: 0; background: #e5e5e5; border: 1px solid #7ea3d2; padding: 0 4px; outline: 0; opacity: 1; }
.topgrid select.fld { padding: 0 2px; }
.quote { width: 210px; height: 22px; font-style: italic; padding: 0 36px; }
.quote::placeholder { color: #808080; opacity: 1; }
.ck { display: flex; align-items: center; gap: 6px; white-space: nowrap; margin-left: 6px; }
.ck input { appearance: none; width: 13px; height: 13px; display: grid; place-items: center; background: #f2f2f2; border: 1px solid #b5b5b5; }
.ck input[type=checkbox]:checked::after { content: ""; width: 4px; height: 8px; margin-bottom: 2px; border: solid #a8a8a8; border-width: 0 2px 2px 0; transform: rotate(38deg); }
.ck input[type=radio] { border-radius: 50%; border-color: #c4c4c4; }
.ck input[type=radio]:checked { border-color: #8d8d8d; }
.ck input[type=radio]:checked::after { content: ""; width: 7px; height: 7px; border-radius: 50%; background: #9d9d9d; }
.radios { display: grid; grid-template-columns: 111px auto; }
.radios .ck { margin: 0; gap: 3px; }
.payrow { display: flex; align-items: center; }
.payrow .cash { width: 100px; flex: none; margin: 0 5px 0 2px; }
.stamp { border: 2px solid #c00000; color: #c00000; font: bold 13px/21px "Noto Sans", sans-serif; width: 144px; text-align: center; margin-right: 1px; }

.tabs { display: flex; height: 19px; flex: none; }
.tabs button { border: solid #7ea3d2; border-width: 1px 1px 0 0; white-space: nowrap; }
.tabs button:first-child { border-left-width: 1px; }
.tabs button.on { background: #ffe49c; font-weight: bold; }
.t1 { margin-top: 4px; }
.t1 button { width: 67px; }
.t1 button:nth-child(1) { width: 74px; }
.t1 button:nth-child(2) { width: 79px; }
.t2 { margin-top: 6px; }
.t2 button { width: 63px; }
.t2 button:nth-child(1) { width: 88px; }
.t2 button:nth-child(3) { width: 77px; }
.t2 button:nth-child(4) { width: 85px; }
.t2 button:nth-child(6) { width: 130px; }
.panel { display: flex; gap: 10px; border: 1px solid #7ea3d2; padding: 9px 8px 7px 9px; }
fieldset { margin: 0; border: 1px solid #7ea3d2; padding: 10px 8px 8px; min-width: 0; display: flex; flex-direction: column; gap: 3px; }
legend { font-weight: bold; line-height: 14px; padding: 0 3px; margin-left: -5px; }
.general { flex: 1; }
.voucher { width: 206px; flex: none; padding-right: 6px; }
.row { display: flex; align-items: center; height: 21px; }
.row label { width: 70px; flex: none; white-space: nowrap; }
.voucher label { width: 86px; }
.w192 { flex: none; width: 192px; margin-right: 8px; }
.row .att { width: 56px; padding-left: 2px; }
.w201 { flex: none; width: 201px; }
.unit { padding-left: 2px; }
.refs { padding-left: 2px; color: #00f; }
.find { margin-left: auto; width: 23px; height: 23px; display: grid; place-items: center; background: #d3dff0; border: 1px solid #7ea3d2; }
.split { width: 50px; height: 8px; flex: none; align-self: center; display: grid; place-items: center; fill: #fff; background: #aec8e7; border: 1px solid #7ea3d2; border-top: 0; }
.split svg { width: 6px; height: 3px; }

.gridbox { border: 1px solid #7ea3d2; background: #fff; overflow: hidden; flex: none; }
.items { width: calc(100% + 6px); }
.grid.items td { text-align: left; }
.grid.items td:first-child { border-right: 1px solid #888; }
.grid.items .n { text-align: right; }
.grid.items .tight td { height: 15px; }
.grid.items tfoot td { height: 17px; padding-bottom: 1px; }
.grid.items tfoot td:first-child { padding-left: 4px; }

.bottom { display: flex; padding-top: 9px; }
.acts { width: 240px; display: flex; flex-direction: column; gap: 6px; }
.acts button { width: 120px; height: 23px; border: 1px solid #7ea3d2; background: #aec8e7; white-space: nowrap; }
.acts button:disabled { background: none; color: #8a8f98; }
dl { margin: 0; display: grid; grid-template-columns: 110px 100px; grid-auto-rows: 23px; align-content: start; padding-top: 3px; line-height: 23px; white-space: nowrap; }
dt { font-weight: bold; }
dd { margin: 0; text-align: right; }
.d2 { margin-left: 144px; grid-template-columns: 136px 100px; }
.dfoot { height: 23px; flex: none; display: flex; justify-content: flex-end; align-items: flex-end; padding: 1px; background: #aec8e7; }
.dfoot svg { width: 10px; height: 10px; }

.taskbar { position: relative; height: 29px; flex: none; display: flex; align-items: center; background: linear-gradient(90deg, #2477b8 0, #3aa0d6 12%, #4aabdb 18%, #2f93cd 40%, #2277bd 62%, #1f6cb5 78%, #164a7d 84%, #153f6c 100%); box-shadow: inset 0 1px #8cc3e6; }
.start { width: 37px; height: 37px; margin: -4px 13px 0 9px; display: grid; place-items: center; border-radius: 50%; background: radial-gradient(circle at 50% 90%, #4fd0ff, #1d5f9f 50%, #123a66 80%); border: 1px solid #9fc7e6; }
.start svg { width: 24px; height: 24px; overflow: visible; }
.tb { width: 44px; height: 28px; margin-right: 2px; display: grid; place-items: center; }
.tb.open { background: linear-gradient(160deg, #b7dcf0, #68b1dc 60%, #5aa9d7); border: 1px solid #2d5f86; border-radius: 3px; box-shadow: inset 0 0 0 1px #b8dff3; }
.tb.bright { background: linear-gradient(160deg, #fff, #a9d5ec 60%, #b6dcf0); }
.zalo { width: 16px; height: 16px; border-radius: 6px; background: #fff; box-shadow: 0 0 0 1px #0a6cf0; color: #0a6cf0; font: bold 6px/16px "Liberation Sans", sans-serif; text-align: center; }
.streak { position: absolute; right: 366px; top: 0; width: 90px; height: 29px; filter: blur(2px); }
.tray { margin-left: auto; display: flex; gap: 8px; align-items: center; }
.taskbar time { width: 86px; padding-left: 4px; text-align: center; color: #fff; font: 11px/16px "Noto Sans", sans-serif; }
.show { width: 14px; height: 28px; border: 1px solid #7aa0c0; background: linear-gradient(150deg, #6c92b6, #18426e 60%); }
```
